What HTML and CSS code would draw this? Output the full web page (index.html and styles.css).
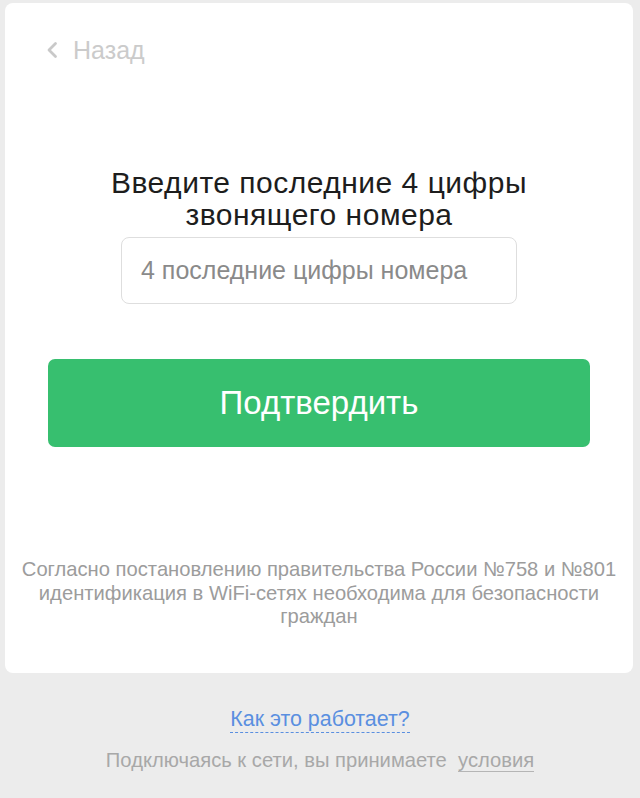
FILE: index.html
```html
<!DOCTYPE html>
<html lang="ru">
<head>
<meta charset="utf-8">
<title>Подтверждение</title>
<link rel="stylesheet" href="styles.css">
</head>
<body>
<main class="card">
  <a class="back" href="#">
    <svg class="back-icon" width="12" height="18" viewBox="0 0 12 18"><path d="M9.5 2.5 L3 9 L9.5 15.5" fill="none" stroke="#c9c9c9" stroke-width="2.8" stroke-linecap="round" stroke-linejoin="round"/></svg>
    <span>Назад</span>
  </a>
  <h1 class="title">Введите последние 4 цифры<br>звонящего номера</h1>
  <div class="field-wrap">
    <input class="field" type="text" placeholder="4 последние цифры номера">
  </div>
  <button class="submit" type="button">Подтвердить</button>
  <p class="note">Согласно постановлению правительства России №758 и №801<br>идентификация в WiFi-сетях необходима для безопасности<br>граждан</p>
</main>
<footer class="footer">
  <a class="how" href="#">Как это работает?</a>
  <p class="terms">Подключаясь к сети, вы принимаете&nbsp; <a class="terms-link" href="#">условия</a></p>
</footer>
</body>
</html>
```

FILE: styles.css
```css
html, body {
  margin: 0;
  padding: 0;
}
body {
  background: #ececec;
  font-family: "Liberation Sans", Arial, sans-serif;
  width: 640px;
  height: 798px;
  overflow: hidden;
}
.card {
  box-sizing: border-box;
  margin: 3px 7px 0 5px;
  height: 670px;
  background: #fff;
  border-radius: 8px;
  padding: 33px 43px 0 43px;
  display: flex;
  flex-direction: column;
}
.back {
  display: flex;
  align-items: center;
  gap: 15px;
  height: 28px;
  margin-left: -2px;
  color: #cbcbcb;
  text-decoration: none;
  font-size: 25px;
  align-self: flex-start;
}
.back-icon {
  display: block;
}
.title {
  margin: 103px 0 0;
  font-weight: normal;
  font-size: 30px;
  line-height: 32px;
  letter-spacing: 0.5px;
  color: #1d1d1d;
  text-align: center;
}
.field-wrap {
  display: flex;
  justify-content: center;
  margin-top: 6px;
}
.field {
  box-sizing: border-box;
  width: 396px;
  height: 67px;
  border: 1px solid #dedede;
  border-radius: 8px;
  padding: 0 19px;
  font-family: "Liberation Sans", Arial, sans-serif;
  font-size: 25px;
  color: #333;
  outline: none;
}
.field::placeholder {
  color: #8a8a8a;
}
.submit {
  margin-top: 55px;
  height: 88px;
  border: none;
  border-radius: 7px;
  background: #37bf6f;
  color: #fff;
  font-family: "Liberation Sans", Arial, sans-serif;
  font-size: 33px;
  cursor: pointer;
}
.note {
  margin: 111px -30px 0;
  font-size: 20.2px;
  line-height: 23.5px;
  color: #9c9c9c;
  text-align: center;
}
.footer {
  display: flex;
  flex-direction: column;
  align-items: center;
  padding-top: 33px;
}
.how {
  font-size: 21.4px;
  line-height: 26px;
  color: #5a8fe0;
  text-decoration: none;
  border-bottom: 1px dashed #5a8fe0;
}
.terms {
  margin: 14px 0 0;
  font-size: 20.2px;
  line-height: 26px;
  color: #a8a8a8;
}
.terms-link {
  color: #a8a8a8;
  text-decoration: none;
  border-bottom: 1px solid #b5b5b5;
}
```
